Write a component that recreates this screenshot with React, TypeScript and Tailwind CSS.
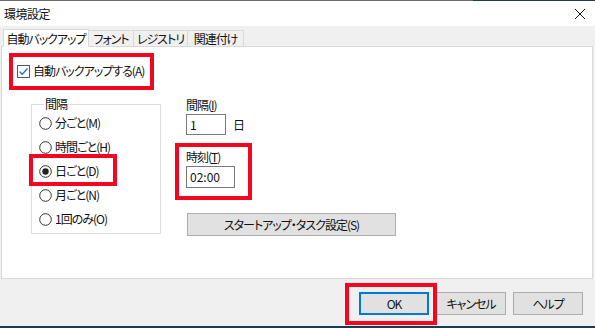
import React from 'react'

const RED = 'border-[#f3061f]'

function Radio({ label, checked }: { label: string; checked?: boolean }) {
  return (
    <div className="flex items-center h-[24px] gap-[3px]">
      <svg width="13" height="13" viewBox="0 0 13 13">
        <circle cx="6.5" cy="6.5" r="5.8" fill="#fff" stroke="#333" strokeWidth="1" />
        {checked && <circle cx="6.5" cy="6.5" r="3.2" fill="#222" />}
      </svg>
      <span>{label}</span>
    </div>
  )
}

function Button({ label, primary }: { label: string; primary?: boolean }) {
  return (
    <div
      className={`w-[70px] h-[23px] flex items-center justify-center bg-[#e1e1e1] border ${
        primary ? 'border-[#0078d7] border-[2px]' : 'border-[#adadad]'
      }`}
    >
      {label}
    </div>
  )
}

export default function App() {
  return (
    <div className="w-[595px] h-[328px] bg-[#f0f0f0] flex flex-col text-[12px] tracking-[-1px] leading-[14px] whitespace-nowrap text-[#111] font-['Noto_Sans_CJK_JP',sans-serif] [font-feature-settings:'palt'] overflow-hidden">
      {/* window edge */}
      <div className="h-px flex">
        <div className="flex-1 bg-[#6d6d6d]" />
        <div className="w-[122px] bg-[#1f3c52]" />
      </div>

      {/* Title bar */}
      <div className="h-[25px] bg-white flex items-center justify-between pl-[4px] pr-[10px]">
        <span className="tracking-[-0.5px]">環境設定</span>
        <svg width="10" height="10" viewBox="0 0 10 10">
          <path d="M0 0L10 10M10 0L0 10" stroke="#111" strokeWidth="1" />
        </svg>
      </div>

      {/* Tabs */}
      <div className="pt-[3px] pl-[3px] h-[20px] flex items-end">
        <div className="w-[86px] shrink-0 h-[18px] -mb-px relative z-10 bg-white border border-b-0 border-[#d9d9d9] flex items-center justify-center">
          自動バックアップ
        </div>
        <div className="w-[45px] shrink-0 h-[16px] border border-b-0 border-l-0 border-[#d9d9d9] flex items-center justify-center">
          フォント
        </div>
        <div className="w-[54px] shrink-0 h-[16px] border border-b-0 border-l-0 border-[#d9d9d9] flex items-center justify-center">
          レジストリ
        </div>
        <div className="w-[56px] shrink-0 h-[16px] border border-b-0 border-l-0 border-[#d9d9d9] flex items-center justify-center">
          関連付け
        </div>
      </div>

      {/* Panel */}
      <div className="ml-px w-[592px] h-[233px] bg-white border border-[#d9d9d9] pl-[15px] pt-[16px]">
        <div className="relative flex items-center gap-[3px] h-[16px] w-fit">
          <svg width="13" height="13" viewBox="0 0 13 13">
            <rect x="0.5" y="0.5" width="12" height="12" fill="#fff" stroke="#3d5d86" />
            <path d="M2.5 6.5L5.2 9.2L10.5 3.5" fill="none" stroke="#2470c4" strokeWidth="1.3" />
          </svg>
          <span>自動バックアップする(A)</span>
          <div className={`absolute left-[-8px] top-[-10px] w-[145px] h-[37px] border-[4px] ${RED}`} />
        </div>

        <div className="flex mt-[18px]">
          {/* interval group */}
          <fieldset className="ml-[14px] w-[130px] h-[137px] border border-[#dcdcdc] pl-[7px]">
            <legend className="ml-[5px] px-[1px] leading-[14px]">間隔</legend>
            <div className="flex flex-col">
              <Radio label="分ごと(M)" />
              <Radio label="時間ごと(H)" />
              <div className="relative">
                <Radio label="日ごと(D)" checked />
                <div className={`absolute left-[-10px] top-[-5px] w-[88px] h-[32px] border-[4px] ${RED}`} />
              </div>
              <Radio label="月ごと(N)" />
              <Radio label="1回のみ(O)" />
            </div>
          </fieldset>

          {/* right column */}
          <div className="ml-[25px] flex flex-col">
            <span className="mt-px">
              間隔(<span className="underline">I</span>)
            </span>
            <div className="flex items-center mt-[2px] gap-[7px]">
              <div className="w-[40px] h-[21px] border border-[#7a7a7a] flex items-center px-[3px]">1</div>
              <span>日</span>
            </div>
            <div className="relative mt-[15px] w-fit">
              <span>
                時刻(<span className="underline">T</span>)
              </span>
              <div className="w-[49px] h-[22px] mt-[2px] border border-[#7a7a7a] flex items-center px-[3px] tracking-[0px]">02:00</div>
              <div className={`absolute left-[-11px] top-[-7px] w-[77px] h-[57px] border-[4px] ${RED}`} />
            </div>
            <div className="mt-[25px] ml-px w-[209px] h-[23px] bg-[#e1e1e1] border border-[#adadad] flex items-center justify-center">
              スタートアップ・タスク設定(S)
            </div>
          </div>
        </div>
      </div>

      {/* Bottom buttons */}
      <div className="flex-1 flex justify-end items-start pt-[13px] pr-[12px] gap-[7px]">
        <div className="relative">
          <Button label="OK" primary />
          <div className={`absolute left-[-14px] top-[-9px] w-[92px] h-[42px] border-[4px] ${RED}`} />
        </div>
        <Button label="キャンセル" />
        <Button label="ヘルプ" />
      </div>

      <div className="h-[2px] bg-[#1d3a52]" />
    </div>
  )
}
